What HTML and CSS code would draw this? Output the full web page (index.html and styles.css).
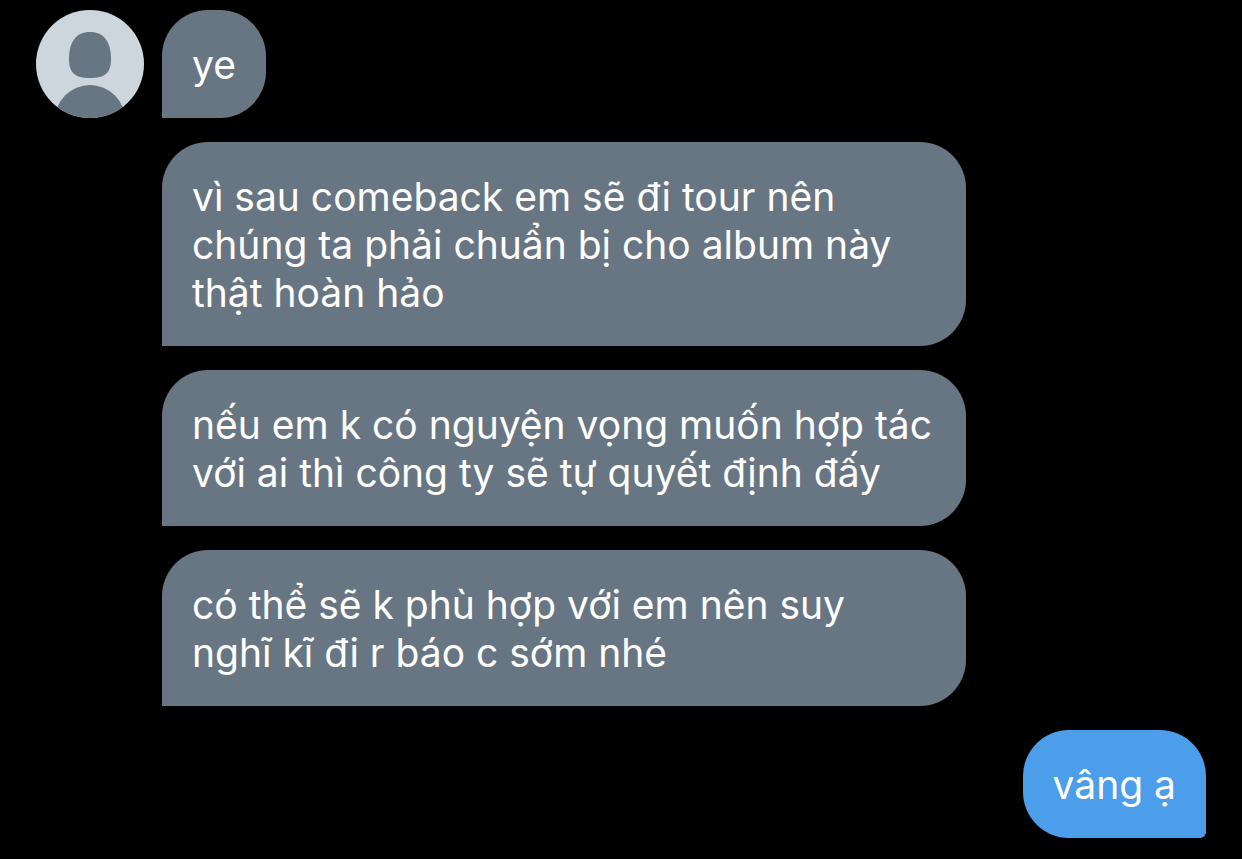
FILE: index.html
```
<!DOCTYPE html>
<html lang="vi">
<head>
    <meta charset="UTF-8">
    <meta name="viewport" content="width=device-width, initial-scale=1.0">
    <title>Messages</title>
    <link rel="stylesheet" href="styles.css">
</head>
<body>
    <main class="chat">
        <div class="received">
            <svg class="avatar" viewBox="0 0 108 108" role="img" aria-label="Avatar">
                <clipPath id="circle"><circle cx="54" cy="54" r="54"/></clipPath>
                <g clip-path="url(#circle)">
                    <rect width="108" height="108" fill="#ced6dd"/>
                    <path d="M54 22C40 22 33 32 33 49C33 63 39 68 54 68C69 68 75 63 75 49C75 32 68 22 54 22Z" fill="#687683"/>
                    <circle cx="54" cy="110" r="35" fill="#687683"/>
                </g>
            </svg>
            <div class="messages">
                <p class="bubble">ye</p>
                <p class="bubble">vì sau comeback em sẽ đi tour nên chúng ta phải chuẩn bị cho album này thật hoàn hảo</p>
                <p class="bubble">nếu em k có nguyện vọng muốn hợp tác với ai thì công ty sẽ tự quyết định đấy</p>
                <p class="bubble">có thể sẽ k phù hợp với em nên suy nghĩ&nbsp;kĩ đi r báo c sớm nhé</p>
            </div>
        </div>
        <p class="bubble sent">vâng ạ</p>
    </main>
</body>
</html>
```
FILE: styles.css
```
* {
    box-sizing: border-box;
}
body {
    margin: 0;
    background: #000;
    color: #fff;
    font-family: Inter, "Noto Sans", sans-serif;
    font-size: 39px;
    line-height: 48px;
}
.chat {
    display: flex;
    flex-direction: column;
    gap: 24px;
    padding: 10px 36px 20px;
}
.received {
    display: flex;
    gap: 18px;
}
.avatar {
    flex: none;
    width: 108px;
    height: 108px;
}
.messages {
    flex: 1;
    display: flex;
    flex-direction: column;
    align-items: flex-start;
    gap: 24px;
}
.bubble {
    max-width: 77%;
    margin: 0;
    padding: 31px 30px 29px;
    border-radius: 46px 46px 46px 0;
    background: #687683;
}
.sent {
    align-self: flex-end;
    border-radius: 46px 46px 6px 46px;
    background: #4c9eeb;
}
```
